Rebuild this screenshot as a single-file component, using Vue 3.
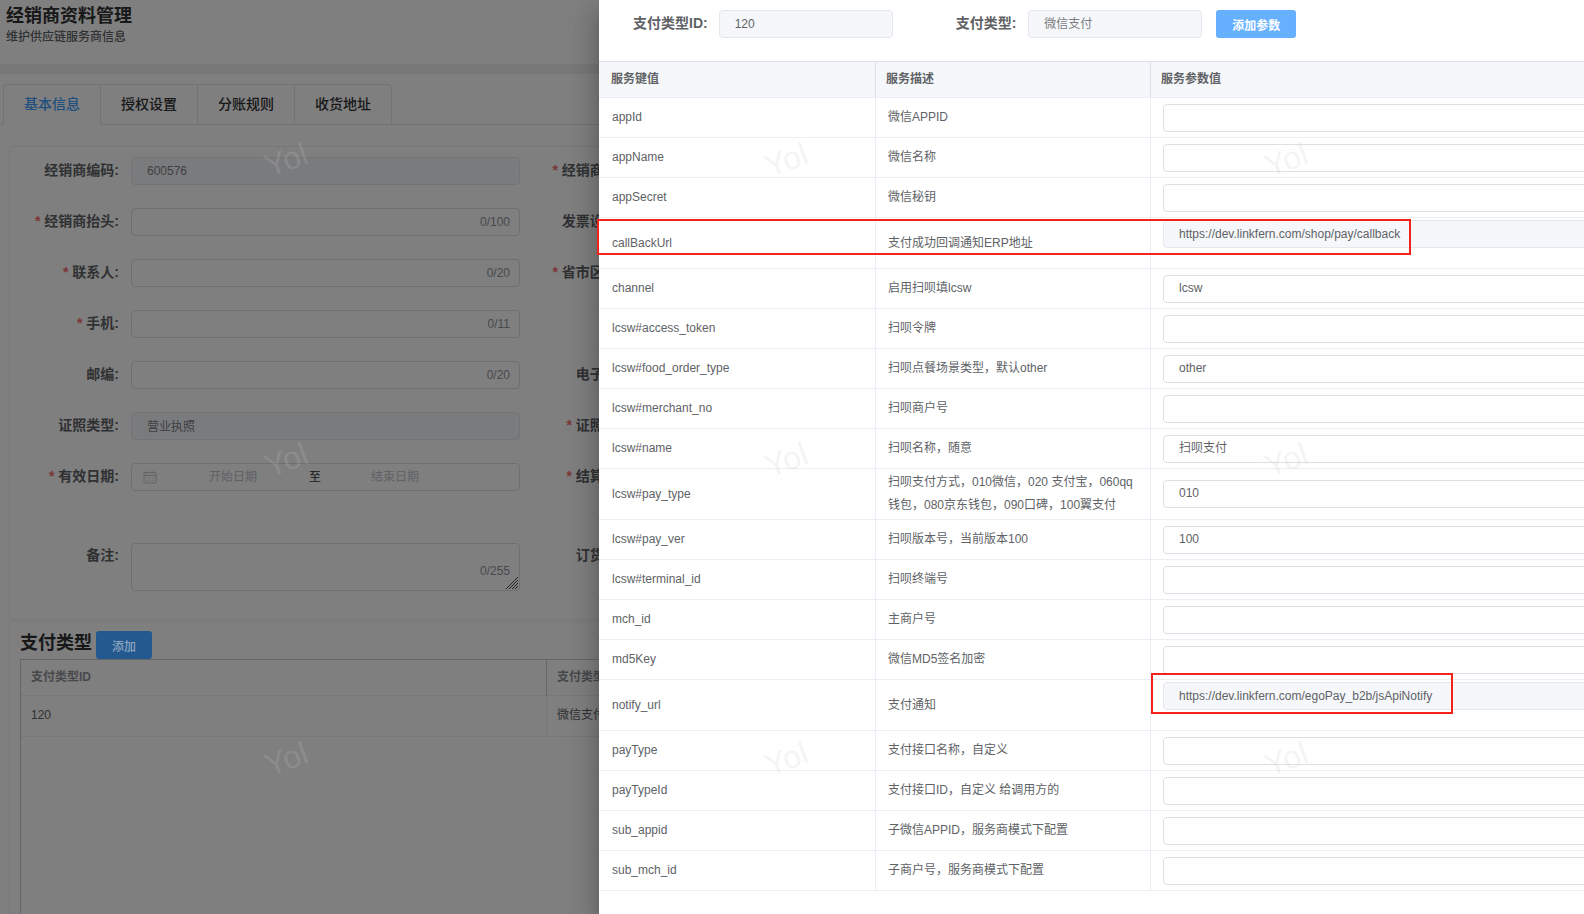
<script setup>
const tabs = ['基本信息', '授权设置', '分账规则', '收货地址']

const fields = [
  { label: '经销商编码', value: '600576', disabled: true },
  { label: '经销商名称', req: true },
  { label: '经销商抬头', req: true, count: '0/100' },
  { label: '发票设置项' },
  { label: '联系人', req: true, count: '0/20' },
  { label: '省市区地址', req: true },
  { label: '手机', req: true, count: '0/11' },
  { label: '' , blank: true },
  { label: '邮编', count: '0/20' },
  { label: '电子邮箱' },
  { label: '证照类型', value: '营业执照', disabled: true, cjk: true },
  { label: '证照号码', req: true },
  { label: '有效日期', req: true, date: true },
  { label: '结算方式', req: true },
  { label: '备注', area: true, count: '0/255' },
  { label: '订货说明', area: true }
]

const rows = [
  { k: 'appId', d: '微信APPID' },
  { k: 'appName', d: '微信名称' },
  { k: 'appSecret', d: '微信秘钥' },
  { k: 'callBackUrl', d: '支付成功回调通知ERP地址', v: 'https://dev.linkfern.com/shop/pay/callback', locked: true },
  { k: 'channel', d: '启用扫呗填lcsw', v: 'lcsw' },
  { k: 'lcsw#access_token', d: '扫呗令牌' },
  { k: 'lcsw#food_order_type', d: '扫呗点餐场景类型，默认other', v: 'other' },
  { k: 'lcsw#merchant_no', d: '扫呗商户号' },
  { k: 'lcsw#name', d: '扫呗名称，随意', v: '扫呗支付' },
  { k: 'lcsw#pay_type', d: '扫呗支付方式，010微信，020 支付宝，060qq钱包，080京东钱包，090口碑，100翼支付', v: '010', wrap: true },
  { k: 'lcsw#pay_ver', d: '扫呗版本号，当前版本100', v: '100' },
  { k: 'lcsw#terminal_id', d: '扫呗终端号' },
  { k: 'mch_id', d: '主商户号' },
  { k: 'md5Key', d: '微信MD5签名加密' },
  { k: 'notify_url', d: '支付通知', v: 'https://dev.linkfern.com/egoPay_b2b/jsApiNotify', locked: true },
  { k: 'payType', d: '支付接口名称，自定义' },
  { k: 'payTypeId', d: '支付接口ID，自定义 给调用方的' },
  { k: 'sub_appid', d: '子微信APPID，服务商模式下配置' },
  { k: 'sub_mch_id', d: '子商户号，服务商模式下配置' }
]

const marks = [
  { x: 261, y: 140 }, { x: 761, y: 140 }, { x: 1261, y: 140 },
  { x: 261, y: 440 }, { x: 761, y: 440 }, { x: 1261, y: 440 },
  { x: 261, y: 739 }, { x: 761, y: 739 }, { x: 1261, y: 739 }
]
</script>

<template>
  <div class="screen">
    <div class="main">
      <header class="head">
        <h1>经销商资料管理</h1>
        <p>维护供应链服务商信息</p>
      </header>
      <div class="strip"></div>

      <nav class="tabs">
        <div v-for="(t, i) in tabs" :key="t" class="tab" :class="{ active: i === 0 }">{{ t }}</div>
      </nav>

      <section class="card form-card">
        <div class="form">
          <div v-for="(f, i) in fields" :key="i" class="field" :class="{ 'area-field': f.area }">
            <template v-if="!f.blank">
              <label class="flabel"><span v-if="f.req" class="star">*</span>{{ f.label }}:</label>
              <div v-if="f.date" class="finput range">
                <svg class="cal" width="14" height="14" viewBox="0 0 14 14" fill="none" stroke="#c0c4cc" stroke-width="1">
                  <rect x="1" y="2.5" width="12" height="10.5" rx="1" />
                  <path d="M1 5.5h12M4 1v2.5M10 1v2.5" />
                  <path d="M3.5 8h1M6.5 8h1M9.5 8h1M3.5 10.5h1M6.5 10.5h1M9.5 10.5h1" />
                </svg>
                <span class="ph p1">开始日期</span>
                <span class="to">至</span>
                <span class="ph p2">结束日期</span>
              </div>
              <div v-else class="finput" :class="{ disabled: f.disabled, area: f.area, cjk: f.cjk }">
                <span>{{ f.value }}</span>
                <span v-if="f.count" class="count">{{ f.count }}</span>
                <svg v-if="f.area" class="grip" width="14" height="14" viewBox="0 0 14 14" stroke="#4a4a4a" stroke-width="1">
                  <path d="M1 13L13 1M4 13l9-9M7 13l6-6M10 13l3-3" />
                </svg>
              </div>
            </template>
          </div>
        </div>
      </section>

      <section class="card pay-card">
        <div class="pay-head">
          <h2>支付类型</h2>
          <button class="btn-add">添加</button>
        </div>
        <div class="pay-table">
          <div class="pay-row pay-th">
            <div>支付类型ID</div>
            <div>支付类型名称</div>
          </div>
          <div class="pay-row pay-td">
            <div>120</div>
            <div>微信支付</div>
          </div>
        </div>
      </section>
    </div>

    <div class="mask"></div>

    <aside class="drawer">
      <div class="topbar">
        <label class="tlabel l1">支付类型ID:</label>
        <div class="tinput i1">120</div>
        <label class="tlabel l2">支付类型:</label>
        <div class="tinput i2">微信支付</div>
        <button class="btn-param">添加参数</button>
      </div>

      <div class="grid">
        <div class="gr gh">
          <div class="c">服务键值</div>
          <div class="c">服务描述</div>
          <div class="c">服务参数值</div>
        </div>
        <div v-for="r in rows" :key="r.k" class="gr" :class="{ tall: r.locked, wrap: r.wrap }">
          <div class="c">{{ r.k }}</div>
          <div class="c desc">{{ r.d }}</div>
          <div class="c vc">
            <div class="pinput" :class="{ locked: r.locked }">{{ r.v }}</div>
          </div>
        </div>
      </div>
    </aside>

    <div class="redbox r1"></div>
    <div class="redbox r2"></div>

    <div v-for="(m, i) in marks" :key="i" class="mark" :style="{ left: m.x + 'px', top: m.y + 'px' }">Yol</div>
  </div>
</template>

<style>
html, body { margin: 0; padding: 0; overflow: hidden; }
</style>

<style scoped>
* { box-sizing: border-box; }
.screen {
  position: relative;
  width: 1584px;
  height: 914px;
  overflow: hidden;
  background: #fff;
  font-family: "Liberation Sans", "Noto Sans CJK SC", sans-serif;
  font-size: 12px;
  color: #606266;
}
.main { width: 1584px; height: 914px; overflow: hidden; }
.head { height: 64px; padding: 6px 6px 0; }
.head h1 { margin: 0; font-size: 18px; line-height: 21px; font-weight: 700; color: #303133; }
.head p { margin: 2px 0 0; font-size: 12px; line-height: 17px; font-weight: 500; color: #606266; }
.strip { height: 10px; background: linear-gradient(#f0f1f3, #eceef0); }

.tabs {
  display: flex;
  margin-top: 10px;
  padding-left: 3px;
  height: 41px;
  border-bottom: 1px solid #e4e7ed;
}
.tab {
  width: 97px;
  height: 41px;
  line-height: 39px;
  text-align: center;
  font-size: 14px;
  font-weight: 500;
  color: #303133;
  border: 1px solid #e4e7ed;
  border-left: none;
}
.tab:first-child { width: 98px; border-left: 1px solid #e4e7ed; border-top-left-radius: 4px; border-bottom-color: #fff; }
.tab:last-child { border-top-right-radius: 4px; }
.tab.active { color: #409eff; }

.card {
  margin-left: 9px;
  width: 1500px;
  border: 1px solid #ebeef5;
  border-radius: 4px;
}
.form-card { margin-top: 21px; height: 474px; padding: 10px 0 0; }
.form {
  display: grid;
  grid-template-columns: 517.5px 517.5px;
  row-gap: 23px;
  align-items: start;
}
.field { display: flex; align-items: flex-start; height: 28px; }
.area-field { height: 48px; margin-top: 29px; }
.flabel {
  width: 109px;
  flex: none;
  text-align: right;
  font-size: 14px;
  line-height: 26px;
  font-weight: 600;
  white-space: nowrap;
}
.area-field .flabel { line-height: 24px; }
.star { color: #f56c6c; margin-right: 4px; }
.finput {
  position: relative;
  width: 389px;
  height: 28px;
  margin-left: 12px;
  flex: none;
  display: flex;
  align-items: center;
  padding-left: 15px;
  border: 1px solid #dcdfe6;
  border-radius: 4px;
  font-size: 12px;
}
.finput.disabled { background: #f5f7fa; border-color: #e4e7ed; color: #7d8086; }
.finput.cjk { padding-bottom: 2px; }
.finput.area { height: 48px; }
.count {
  position: absolute;
  right: 9px;
  top: 6px;
  color: #909399;
}
.area .count { top: 20px; }
.grip { position: absolute; right: 0; bottom: 0; }
.range { padding-left: 11px; padding-bottom: 3px; }
.ph { color: #c0c4cc; }
.cal { flex: none; margin-top: 3px; }
.p1 { margin-left: 52px; }
.to { margin-left: 52px; color: #303133; }
.p2 { margin-left: 50px; }

.pay-card { height: 400px; margin-top: 1px; padding: 9px 10px 0; }
.pay-head { display: flex; height: 28px; align-items: flex-start; }
.pay-head h2 { margin: 0; font-size: 18px; line-height: 24px; font-weight: 700; color: #303133; }
.btn-add {
  position: relative;
  z-index: 2;
  margin-left: 4px;
  width: 56px;
  height: 28px;
  border: none;
  border-radius: 3px;
  background: #24598f;
  color: #8ea6bf;
  font: 500 12px "Liberation Sans", "Noto Sans CJK SC", sans-serif;
}
.pay-table {
  height: 400px;
  border-top: 1px solid #c9ccd2;
  border-left: 1px solid #c9ccd2;
}
.pay-row { display: grid; grid-template-columns: 526px 1fr; }
.pay-row > div { padding-left: 10px; border-bottom: 1px solid #ebeef5; }
.pay-row > div:first-child { border-right: 1px solid #ebeef5; }
.pay-th > div { height: 36px; line-height: 35px; font-weight: 600; color: #909399; background: #fff; }
.pay-th > div:first-child { border-right-color: #c9ccd2; }
.pay-td > div { height: 41px; line-height: 38px; color: #606266; }

.mask { position: absolute; inset: 0; background: rgba(0, 0, 0, 0.5); }

.drawer {
  position: absolute;
  top: 0;
  left: 599px;
  width: 985px;
  height: 914px;
  background: #fff;
  overflow: hidden;
  box-shadow: 0 8px 10px -5px rgba(0,0,0,.2), 0 16px 24px 2px rgba(0,0,0,.14), 0 6px 30px 5px rgba(0,0,0,.12);
}
.topbar { display: flex; align-items: flex-start; height: 61px; padding-top: 10px; }
.tlabel { font-size: 14px; font-weight: 600; line-height: 27px; white-space: nowrap; }
.l1 { margin-left: 34px; }
.l2 { margin-left: 63px; }
.tinput {
  height: 28px;
  line-height: 26px;
  padding-left: 15px;
  background: #f5f7fa;
  border: 1px solid #e4e7ed;
  border-radius: 4px;
  color: #606266;
}
.i1 { width: 174px; margin-left: 11px; }
.i2 { width: 174px; margin-left: 12px; color: #7a7c80; }
.btn-param {
  width: 80px;
  height: 28px;
  margin-left: 14px;
  border: none;
  border-radius: 3px;
  background: #66b1ff;
  color: #fff;
  font: 600 12px "Liberation Sans", "Noto Sans CJK SC", sans-serif;
}

.gr {
  display: grid;
  grid-template-columns: 277px 275px 1fr;
  height: 40px;
  border-bottom: 1px solid #ebeef5;
}
.gr.tall { height: 51px; }
.gr.wrap { height: 51px; }
.gh { height: 37px; border-top: 1px solid #dcdfe6; background: #f5f7fa; font-weight: 600; }
.c {
  min-width: 0;
  display: flex;
  align-items: center;
  padding: 0 10px 0 13px;
  border-right: 1px solid #ebeef5;
  line-height: 23px;
}
.desc { padding-left: 12px; }
.gh .c { padding-left: 10px; border-right-color: #dcdfe6; }
.gh .c:first-child { padding-left: 12px; }
.gr > .c:last-child { border-right: none; }
.vc { padding: 0 0 0 12px; align-items: flex-start; padding-top: 6px; }
.tall .vc { padding-top: 2px; }
.wrap .vc { padding-top: 11px; }
.pinput {
  width: 460px;
  flex: none;
  height: 28px;
  line-height: 25px;
  padding-left: 15px;
  border: 1px solid #dcdfe6;
  border-radius: 4px;
}
.pinput.locked { line-height: 26px; background: #f5f7fa; border-color: #e4e7ed; }

.redbox { position: absolute; border: 2px solid #f5221b; }
.r1 { left: 597px; top: 219px; width: 814px; height: 36px; }
.r2 { left: 1151px; top: 673px; width: 302px; height: 41px; }

.mark {
  position: absolute;
  width: 50px;
  text-align: center;
  font-size: 32px;
  line-height: 40px;
  color: rgba(200, 200, 200, 0.2);
  transform: rotate(-20deg);
  pointer-events: none;
}
</style>
